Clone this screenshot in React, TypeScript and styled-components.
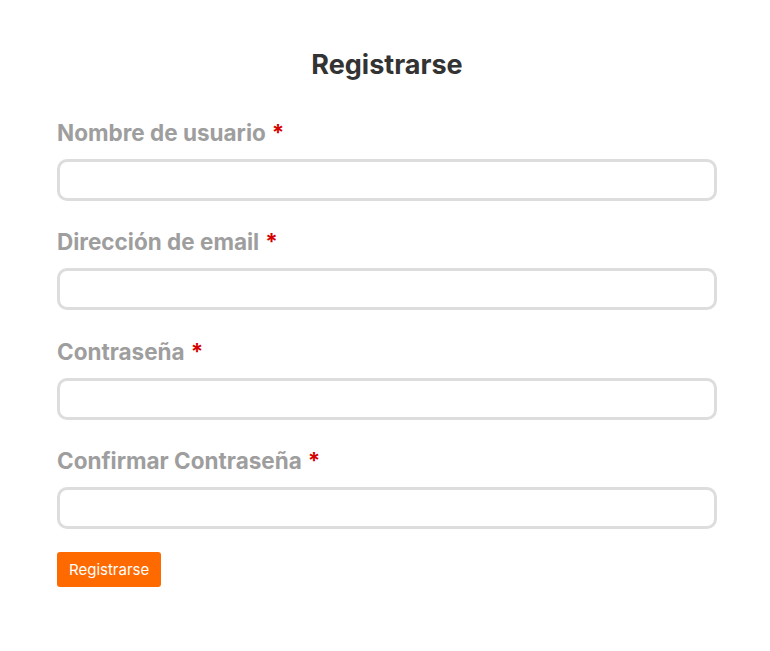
import React from 'react'
import styled, { createGlobalStyle } from 'styled-components'

const GlobalStyle = createGlobalStyle`
  body {
    margin: 0;
    background: #ffffff;
    font-family: Inter, "Liberation Sans", Arial, sans-serif;
  }
`

const Page = styled.div`
  width: 660px;
  margin-left: 57px;
  padding-top: 49px;
`

const Title = styled.h2`
  margin: 0 0 40px;
  font-size: 27px;
  line-height: 32px;
  font-weight: 700;
  color: #333333;
  text-align: center;
`

const Form = styled.form`
  display: flex;
  flex-direction: column;
`

const Field = styled.div`
  display: flex;
  flex-direction: column;
  margin-bottom: 29.33px;

  &:last-of-type {
    margin-bottom: 23px;
  }
`

const Label = styled.label`
  font-size: 22.5px;
  line-height: 24px;
  font-weight: 700;
  color: #9e9e9e;
  margin-bottom: 14px;
`

const Required = styled.span`
  color: #d40000;
  margin-left: 6px;
`

const Input = styled.input`
  box-sizing: border-box;
  width: 100%;
  height: 42px;
  border: 3px solid #dddddd;
  border-radius: 10px;
  padding: 0 12px;
  font-family: inherit;
  font-size: 16px;
  outline: none;
  background: #ffffff;
`

const Button = styled.button`
  align-self: flex-start;
  height: 35px;
  padding: 0 12px;
  background: #ff6a00;
  color: #ffffff;
  border: none;
  border-radius: 3px;
  font-family: inherit;
  font-size: 15px;
  cursor: pointer;
`

const fields = [
  { id: 'username', label: 'Nombre de usuario', type: 'text' },
  { id: 'email', label: 'Dirección de email', type: 'email' },
  { id: 'password', label: 'Contraseña', type: 'password' },
  { id: 'confirm', label: 'Confirmar Contraseña', type: 'password' },
]

const App: React.FC = () => {
  return (
    <>
      <GlobalStyle />
      <Page>
        <Title>Registrarse</Title>
        <Form onSubmit={(e) => e.preventDefault()}>
          {fields.map((f) => (
            <Field key={f.id}>
              <Label htmlFor={f.id}>
                {f.label}
                <Required>*</Required>
              </Label>
              <Input id={f.id} type={f.type} />
            </Field>
          ))}
          <Button type="submit">Registrarse</Button>
        </Form>
      </Page>
    </>
  )
}

export default App
